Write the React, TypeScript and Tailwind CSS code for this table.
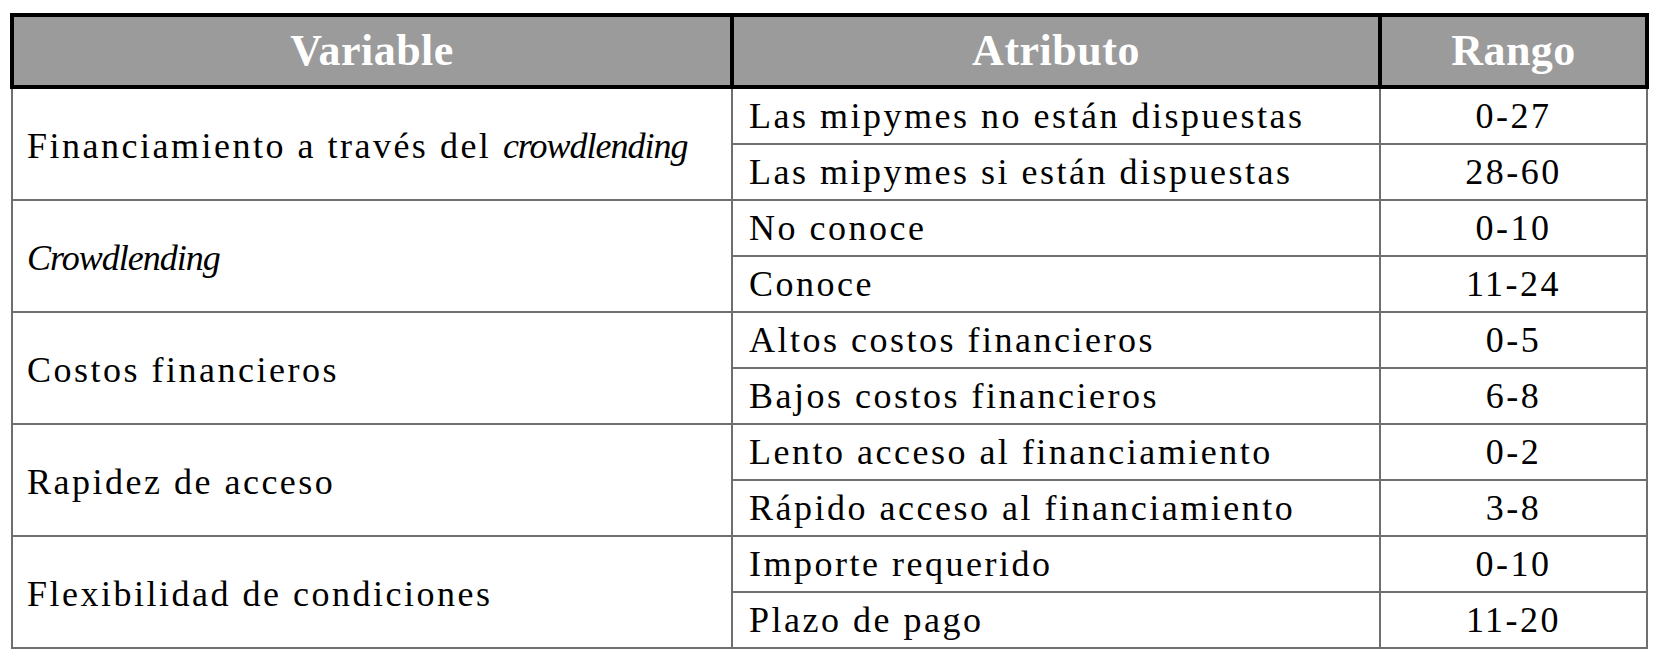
const rows = [
  {
    variable: (
      <>
        Financiamiento a través del <em className="tracking-[-1px]">crowdlending</em>
      </>
    ),
    items: [
      { attr: 'Las mipymes no están dispuestas', range: '0-27' },
      { attr: 'Las mipymes si están dispuestas', range: '28-60' },
    ],
  },
  {
    variable: <em className="tracking-[-1px]">Crowdlending</em>,
    items: [
      { attr: 'No conoce', range: '0-10' },
      { attr: 'Conoce', range: '11-24' },
    ],
  },
  {
    variable: 'Costos financieros',
    items: [
      { attr: 'Altos costos financieros', range: '0-5' },
      { attr: 'Bajos costos financieros', range: '6-8' },
    ],
  },
  {
    variable: 'Rapidez de acceso',
    items: [
      { attr: 'Lento acceso al financiamiento', range: '0-2' },
      { attr: 'Rápido acceso al financiamiento', range: '3-8' },
    ],
  },
  {
    variable: 'Flexibilidad de condiciones',
    items: [
      { attr: 'Importe requerido', range: '0-10' },
      { attr: 'Plazo de pago', range: '11-20' },
    ],
  },
];

export default function App() {
  return (
    <div className="min-h-screen bg-white pl-[10px] pt-[13px] font-['Liberation_Serif',serif] text-black">
      <table className="w-[1635px] table-fixed border-collapse">
        <colgroup>
          <col className="w-[720px]" />
          <col className="w-[648px]" />
          <col className="w-[267px]" />
        </colgroup>
        <thead>
          <tr className="h-[72px] bg-[#9b9b9b] text-[44px] font-bold tracking-[0.5px] text-white">
            <th className="border-4 border-black text-center">Variable</th>
            <th className="border-4 border-black text-center">Atributo</th>
            <th className="border-4 border-black text-center">Rango</th>
          </tr>
        </thead>
        <tbody className="text-[36px] tracking-[2.5px]">
          {rows.map((group, idx) =>
            group.items.map((item, i) => (
              <tr key={`${idx}-${i}`} className="h-[56px]">
                {i === 0 && (
                  <td rowSpan={2} className="border-2 border-[#6f6f6f] px-[14px] pt-[4px] align-middle">
                    {group.variable}
                  </td>
                )}
                <td className="border-2 border-[#6f6f6f] px-[16px] align-middle">{item.attr}</td>
                <td className="border-2 border-[#6f6f6f] text-center align-middle">{item.range}</td>
              </tr>
            ))
          )}
        </tbody>
      </table>
    </div>
  );
}
